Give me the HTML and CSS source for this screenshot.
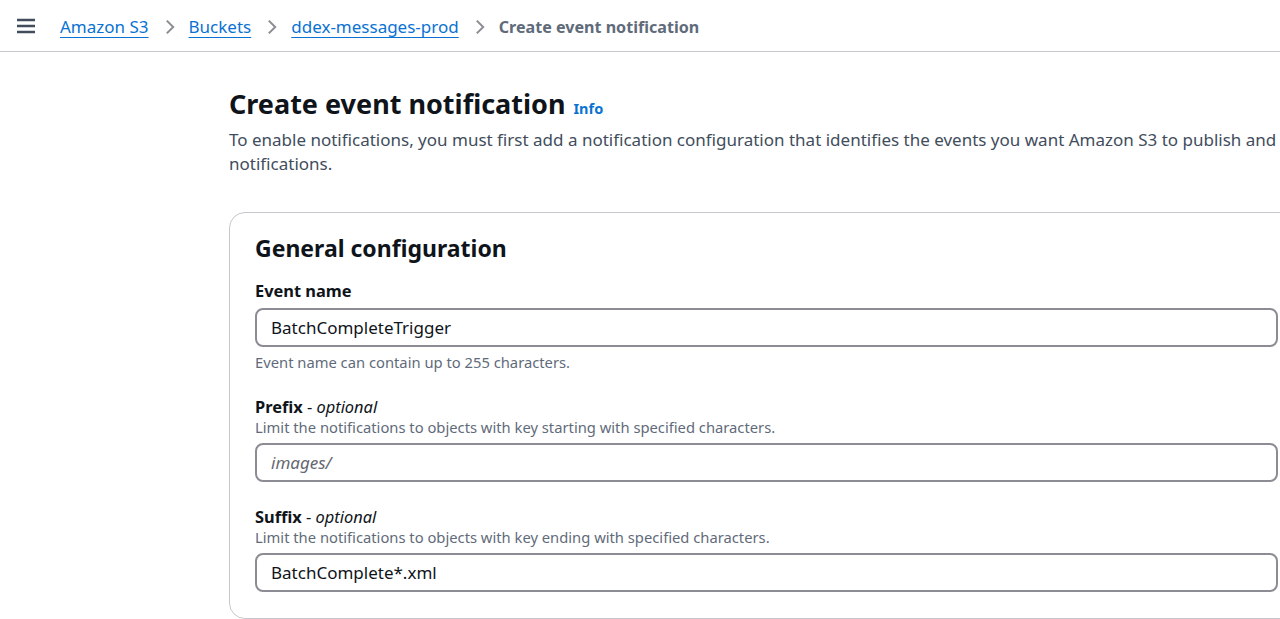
FILE: index.html
```
<!DOCTYPE html>
<html lang="en">
<head>
<meta charset="utf-8">
<title>Create event notification</title>
<link rel="stylesheet" href="styles.css">
</head>
<body>
<header class="topbar">
  <button class="menu-btn" aria-label="Open navigation">
    <svg width="18" height="16" viewBox="0 0 18 16"><path d="M0 2h18M0 8h18M0 14h18" stroke="#414d5c" stroke-width="2.4" fill="none"/></svg>
  </button>
  <nav class="crumbs">
    <a href="#" class="crumb-link">Amazon S3</a>
    <svg class="chev" width="10" height="16" viewBox="0 0 10 16"><path d="M1.8 1.6l6.4 6.4-6.4 6.4" stroke="#8c8c94" stroke-width="2" fill="none"/></svg>
    <a href="#" class="crumb-link">Buckets</a>
    <svg class="chev" width="10" height="16" viewBox="0 0 10 16"><path d="M1.8 1.6l6.4 6.4-6.4 6.4" stroke="#8c8c94" stroke-width="2" fill="none"/></svg>
    <a href="#" class="crumb-link">ddex-messages-prod</a>
    <svg class="chev" width="10" height="16" viewBox="0 0 10 16"><path d="M1.8 1.6l6.4 6.4-6.4 6.4" stroke="#8c8c94" stroke-width="2" fill="none"/></svg>
    <span class="crumb-current">Create event notification</span>
  </nav>
</header>
<main class="content">
  <div class="page-head">
    <h1 class="title">Create event notification <a href="#" class="info">Info</a></h1>
    <p class="desc">To enable notifications, you must first add a notification configuration that identifies the events you want Amazon S3 to publish and the destinations where you want Amazon S3 to send the notifications.</p>
  </div>
  <section class="card">
    <h2 class="card-title">General configuration</h2>
    <div class="field">
      <label class="label">Event name</label>
      <div class="input"><span class="value">BatchCompleteTrigger</span></div>
      <div class="hint">Event name can contain up to 255 characters.</div>
    </div>
    <div class="field">
      <label class="label">Prefix<span class="opt"> - <i>optional</i></span></label>
      <div class="field-desc">Limit the notifications to objects with key starting with specified characters.</div>
      <div class="input"><span class="placeholder">images/</span></div>
    </div>
    <div class="field">
      <label class="label">Suffix<span class="opt"> - <i>optional</i></span></label>
      <div class="field-desc">Limit the notifications to objects with key ending with specified characters.</div>
      <div class="input"><span class="value">BatchComplete*.xml</span></div>
    </div>
  </section>
</main>
</body>
</html>
```
FILE: styles.css
```
html, body {
  margin: 0;
  background: #ffffff;
  overflow: hidden;
}
body {
  font-family: "Noto Sans", "Open Sans", sans-serif;
  color: #0f141a;
  width: 1280px;
  height: 619px;
}
.topbar {
  height: 52px;
  border-bottom: 1px solid #c6c6cd;
  display: flex;
  align-items: center;
  padding-left: 17px;
  box-sizing: border-box;
}
.menu-btn {
  border: 0;
  background: none;
  padding: 0;
  width: 18px;
  height: 16px;
  display: flex;
  margin-top: 1px;
}
.crumbs {
  display: flex;
  align-items: center;
  margin-left: 25px;
  padding-top: 2px;
  font-size: 17px;
}
.crumb-link {
  color: #0972d3;
  text-decoration: underline;
  text-underline-offset: 4px;
  text-decoration-thickness: 1px;
}
.chev {
  margin: 0 14px 0 16px;
}
.crumb-current {
  color: #5f6b7a;
  font-weight: 700;
  font-size: 16.1px;
}
.content {
  padding-left: 229px;
  width: 1550px;
}
.page-head {
  padding-top: 32px;
}
.title {
  margin: 0;
  font-size: 27px;
  line-height: 40px;
  font-weight: 700;
  color: #0f141a;
}
.info {
  font-size: 14.5px;
  color: #0972d3;
  text-decoration: none;
  font-weight: 700;
  margin-left: 1px;
}
.desc {
  margin: 0;
  font-size: 17px;
  line-height: 24px;
  color: #414d5c;
}
.card {
  margin-top: 36px;
  border: 1px solid #c6c6cd;
  border-radius: 16px;
  padding: 19px 25px 26px;
  box-sizing: border-box;
  width: 1550px;
}
.card-title {
  margin: 0 0 15px;
  font-size: 23px;
  line-height: 32px;
  font-weight: 700;
}
.field {
  display: flex;
  flex-direction: column;
  margin-bottom: 23px;
}
.field:last-child {
  margin-bottom: 0;
}
.label {
  font-size: 16.4px;
  line-height: 24px;
  font-weight: 700;
  color: #0f141a;
}
.opt {
  font-weight: 400;
}
.field-desc, .hint {
  font-size: 14.75px;
  line-height: 20px;
  color: #5f6b7a;
}
.field-desc {
  margin-top: -2px;
  margin-bottom: 6px;
}
.hint {
  margin-top: 5px;
}
.label + .input {
  margin-top: 5px;
}
.input {
  width: 1023px;
  height: 39px;
  border: 2px solid #8c8c94;
  border-radius: 8px;
  box-sizing: border-box;
  padding: 0 14px;
  display: flex;
  align-items: center;
  font-size: 17px;
}
.value {
  color: #0f141a;
}
.placeholder {
  color: #656871;
  font-style: italic;
}
```
